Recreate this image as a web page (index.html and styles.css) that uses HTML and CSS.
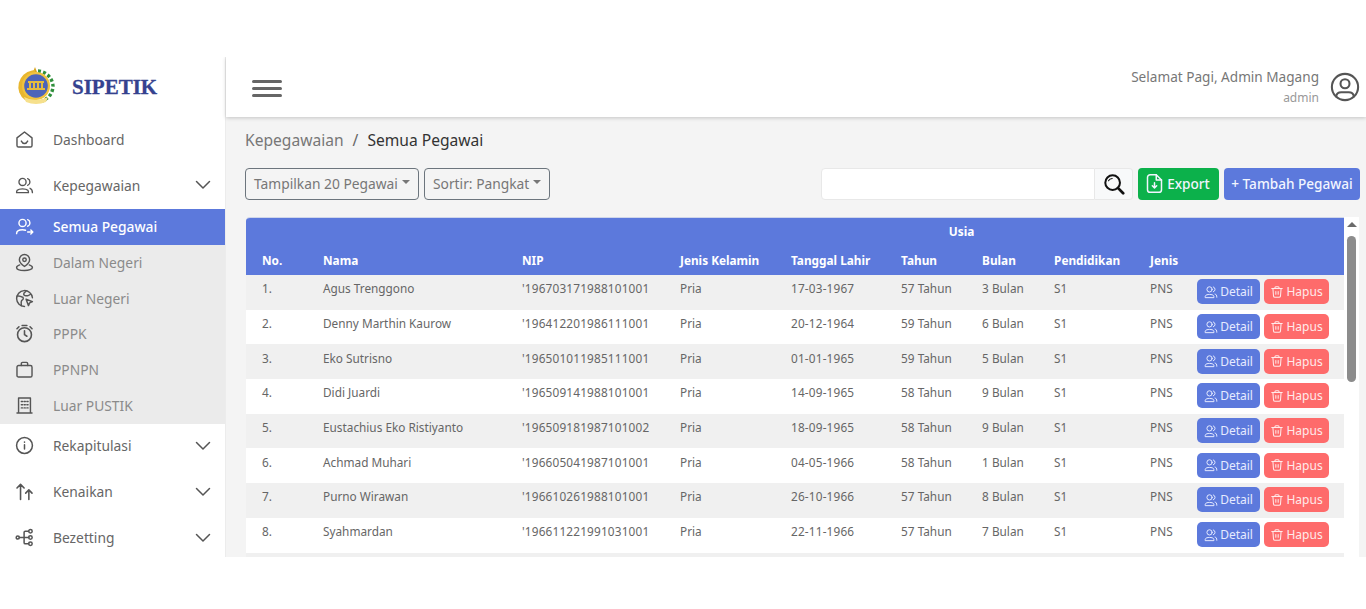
FILE: index.html
```html
<!DOCTYPE html>
<html lang="id">
<head>
<meta charset="utf-8">
<title>SIPETIK</title>
<link rel="stylesheet" href="styles.css">
</head>
<body>
<svg class="defs" width="0" height="0">
  <symbol id="i-users" viewBox="0 0 24 24"><g fill="none" stroke="currentColor" stroke-width="1.700" stroke-linecap="round" stroke-linejoin="round"><circle cx="9.500" cy="7.500" r="4.500"/><path d="M2 21c0-1.200 0-2.200.8-3 1-1 3-1.800 6.700-1.800s5.700.8 6.700 1.800c.8.800.8 1.800.8 3z"/><path d="M16 3.300a4.500 4.500 0 0 1 0 8.400M19 15.500c2 .6 3 1.800 3 5.500"/></g></symbol>
  <symbol id="i-chev" viewBox="0 0 16 10"><path d="M1.500 1.500 8 8l6.500-6.500" fill="none" stroke="currentColor" stroke-width="1.500" stroke-linecap="round" stroke-linejoin="round"/></symbol>
  <symbol id="i-trash" viewBox="0 0 24 24"><g fill="none" stroke="currentColor" stroke-width="1.800" stroke-linecap="round" stroke-linejoin="round"><path d="M3 6h18M8.500 6V4.500A1.500 1.500 0 0 1 10 3h4a1.500 1.500 0 0 1 1.500 1.500V6M5 6l1 13a2.500 2.500 0 0 0 2.500 2h7A2.500 2.500 0 0 0 18 19l1-13M10 11v5M14 11v5"/></g></symbol>
</svg>
<div class="app">
  <aside class="sidebar">
    <div class="brand">
      <svg class="emblem" viewBox="0 0 40 40">
        <path d="M19 1l-2 5h4z" fill="#d9a520"/>
        <path d="M16 4.500A16.500 16.500 0 0 0 9 34l6 3 4-1V4z" fill="#e8b62e"/>
        <path d="M22 5a16 16 0 0 1 15 15 16 16 0 0 1-11 15" fill="none" stroke="#2f8f3c" stroke-width="3.400" stroke-dasharray="3 2.200"/>
        <circle cx="20" cy="20" r="14" fill="#f0c23e"/>
        <circle cx="20" cy="20" r="11.800" fill="#4c64b9"/>
        <path d="M12 15h16v2H12zM13 17h2v5h-2zM17 17h2v5h-2zM21 17h2v5h-2zM25 17h2v5h-2zM11 22h18v2H11z" fill="#e5bb3e"/>
        <path d="M8 31q12 6 24 0l-2 5q-10 4-20 0z" fill="#f6e08c"/>
      </svg>
      <span class="brand-name">SIPETIK</span>
    </div>
    <nav class="menu">
      <a class="item">
        <svg class="ico" viewBox="0 0 24 24"><g fill="none" stroke="currentColor" stroke-width="1.800" stroke-linecap="round" stroke-linejoin="round"><path d="M4.500 21.500h15a2 2 0 0 0 2-2V10L12 2.500 2.500 10v9.500a2 2 0 0 0 2 2z"/><path d="M8 14c1 2 2.500 3 4 3s3-1 4-3"/></g></svg>
        <span>Dashboard</span>
      </a>
      <a class="item">
        <svg class="ico"><use href="#i-users"/></svg>
        <span>Kepegawaian</span>
        <svg class="chev"><use href="#i-chev"/></svg>
      </a>
      <div class="submenu">
        <a class="sub active">
          <svg class="ico" viewBox="0 0 24 24"><g fill="none" stroke="currentColor" stroke-width="1.800" stroke-linecap="round" stroke-linejoin="round"><circle cx="9.500" cy="7.500" r="4.500"/><path d="M2 21c0-3 2.500-4.800 7.500-4.800 1.500 0 2.800.2 3.800.5M16 3.300a4.500 4.500 0 0 1 0 8.400M16 19h6M20 16.500l2.500 2.500-2.500 2.500"/></g></svg>
          <span>Semua Pegawai</span>
        </a>
        <a class="sub">
          <svg class="ico" viewBox="0 0 24 24"><g fill="none" stroke="currentColor" stroke-width="1.800" stroke-linecap="round" stroke-linejoin="round"><path d="M12 2a6.500 6.500 0 0 0-6.500 6.500c0 3.500 3 6 6.500 8.500 3.500-2.500 6.500-5 6.500-8.500A6.500 6.500 0 0 0 12 2z"/><circle cx="12" cy="8.500" r="2.200"/><path d="M6 15c-2.500.8-4 1.800-4 3.200C2 20.500 6.500 22 12 22s10-1.500 10-3.800c0-1.400-1.500-2.400-4-3.200"/></g></svg>
          <span>Dalam Negeri</span>
        </a>
        <a class="sub">
          <svg class="ico" viewBox="0 0 24 24"><g fill="none" stroke="currentColor" stroke-width="1.800" stroke-linecap="round" stroke-linejoin="round"><path d="M12 22A10 10 0 1 1 22 11"/><path d="M3 9c3-1 4 1 6 1s2 3 0 4-1 4-1 7M14 2.500c-1 2-3 2-3 4s3 2 5 2 3-2 4-2"/><path d="M14 13l8 3-3.500 1.500L17 21z"/></g></svg>
          <span>Luar Negeri</span>
        </a>
        <a class="sub">
          <svg class="ico" viewBox="0 0 24 24"><g fill="none" stroke="currentColor" stroke-width="2" stroke-linecap="round" stroke-linejoin="round"><circle cx="12" cy="13.500" r="8.800"/><path d="M12 8.500v5l3 2M9 1.800h6M2.500 6 5 3.500M21.500 6 19 3.500"/></g></svg>
          <span>PPPK</span>
        </a>
        <a class="sub">
          <svg class="ico" viewBox="0 0 24 24"><g fill="none" stroke="currentColor" stroke-width="1.800" stroke-linecap="round" stroke-linejoin="round"><rect x="2.500" y="7" width="19" height="14.500" rx="2"/><path d="M8 7V4.500A1.500 1.500 0 0 1 9.500 3h5A1.500 1.500 0 0 1 16 4.500V7"/></g></svg>
          <span>PPNPN</span>
        </a>
        <a class="sub">
          <svg class="ico" viewBox="0 0 24 24"><g fill="none" stroke="currentColor" stroke-width="1.800" stroke-linecap="round" stroke-linejoin="round"><path d="M4.500 21.500V2.500h15v19M2.500 21.500h19"/><path d="M8 7h1.500M11.500 7H13M15 7h1.500M8 11h1.500M11.500 11H13M15 11h1.500M8 15h1.500M11.500 15H13M15 15h1.500"/></g></svg>
          <span>Luar PUSTIK</span>
        </a>
      </div>
      <a class="item">
        <svg class="ico" viewBox="0 0 24 24"><g fill="none" stroke="currentColor" stroke-width="1.900" stroke-linecap="round"><circle cx="12" cy="12" r="10"/><path d="M12 11v5.500M12 7.500v.3"/></g></svg>
        <span>Rekapitulasi</span>
        <svg class="chev"><use href="#i-chev"/></svg>
      </a>
      <a class="item">
        <svg class="ico" viewBox="0 0 24 24"><g fill="none" stroke="currentColor" stroke-width="2" stroke-linecap="round" stroke-linejoin="round"><path d="M7 22V3M2.500 7.500 7 3l4.500 4.500M17.500 22V10M13.500 14l4-4 4 4"/></g></svg>
        <span>Kenaikan</span>
        <svg class="chev"><use href="#i-chev"/></svg>
      </a>
      <a class="item">
        <svg class="ico" viewBox="0 0 24 24"><g fill="none" stroke="currentColor" stroke-width="1.900" stroke-linecap="round" stroke-linejoin="round"><circle cx="3.500" cy="12" r="2"/><circle cx="19.500" cy="4" r="2.200"/><circle cx="19.500" cy="12" r="2.200"/><circle cx="19.500" cy="20" r="2.200"/><path d="M5.500 12h12M17.300 4H13a1.500 1.500 0 0 0-1.500 1.500v13A1.500 1.500 0 0 0 13 20h4.300"/></g></svg>
        <span>Bezetting</span>
        <svg class="chev"><use href="#i-chev"/></svg>
      </a>
    </nav>
  </aside>
  <div class="main">
    <header class="topbar">
      <div class="burger"><i></i><i></i><i></i></div>
      <div class="user">
        <div class="user-text">
          <div class="user-name">Selamat Pagi, Admin Magang</div>
          <div class="user-role">admin</div>
        </div>
        <svg class="avatar" viewBox="0 0 32 32"><g fill="none" stroke="currentColor" stroke-width="2.200" stroke-linecap="round"><circle cx="16" cy="16" r="14"/><circle cx="16" cy="12.500" r="4.800"/><path d="M6.500 26c.5-3 2.500-4.500 5.500-4.500h8c3 0 5 1.500 5.500 4.500"/></g></svg>
      </div>
    </header>
    <div class="content">
      <div class="crumbs"><span class="crumb-muted">Kepegawaian</span><span class="crumb-sep">/</span><span class="crumb-cur">Semua Pegawai</span></div>
      <div class="toolbar">
        <button class="select sel-a">Tampilkan 20 Pegawai<i class="caret"></i></button>
        <button class="select sel-b">Sortir: Pangkat<i class="caret"></i></button>
        <div class="search">
          <div class="search-input"></div>
          <div class="search-btn"><svg viewBox="0 0 24 24" width="22" height="22"><g fill="none" stroke="#111" stroke-linecap="round"><circle cx="10.500" cy="10.500" r="8" stroke-width="2.200"/><path d="M16.500 16.500 22 22" stroke-width="3"/><path d="M6 8.500a5 5 0 0 1 4-2.500" stroke-width="1.200"/></g></svg></div>
        </div>
        <button class="btn btn-export"><svg viewBox="0 0 24 24" width="21" height="21"><g fill="none" stroke="currentColor" stroke-width="1.700" stroke-linecap="round" stroke-linejoin="round"><path d="M14 2H7a3 3 0 0 0-3 3v14a3 3 0 0 0 3 3h10a3 3 0 0 0 3-3V8z"/><path d="M14 2v6h6M12 11v6M9.500 14.500 12 17l2.500-2.500"/></g></svg>Export</button>
        <button class="btn btn-add">+ Tambah Pegawai</button>
      </div>
      <div class="table-row">
        <div class="table-box">
          <table class="grid">
            <colgroup><col class="c1"><col class="c2"><col class="c3"><col class="c4"><col class="c5"><col class="c6"><col class="c7"><col class="c8"><col class="c9"><col class="c10"></colgroup>
            <thead>
              <tr class="h1"><th colspan="5"></th><th colspan="2" class="center">Usia</th><th colspan="3"></th></tr>
              <tr class="h2"><th>No.</th><th>Nama</th><th>NIP</th><th>Jenis Kelamin</th><th>Tanggal Lahir</th><th>Tahun</th><th>Bulan</th><th>Pendidikan</th><th>Jenis</th><th></th></tr>
            </thead>
            <tbody>
              <tr><td>1.</td><td>Agus Trenggono</td><td>'196703171988101001</td><td>Pria</td><td>17-03-1967</td><td>57 Tahun</td><td>3 Bulan</td><td>S1</td><td>PNS</td><td class="acts"><button class="mini mini-d"><svg><use href="#i-users"/></svg>Detail</button><button class="mini mini-h"><svg><use href="#i-trash"/></svg>Hapus</button></td></tr>
              <tr><td>2.</td><td>Denny Marthin Kaurow</td><td>'196412201986111001</td><td>Pria</td><td>20-12-1964</td><td>59 Tahun</td><td>6 Bulan</td><td>S1</td><td>PNS</td><td class="acts"><button class="mini mini-d"><svg><use href="#i-users"/></svg>Detail</button><button class="mini mini-h"><svg><use href="#i-trash"/></svg>Hapus</button></td></tr>
              <tr><td>3.</td><td>Eko Sutrisno</td><td>'196501011985111001</td><td>Pria</td><td>01-01-1965</td><td>59 Tahun</td><td>5 Bulan</td><td>S1</td><td>PNS</td><td class="acts"><button class="mini mini-d"><svg><use href="#i-users"/></svg>Detail</button><button class="mini mini-h"><svg><use href="#i-trash"/></svg>Hapus</button></td></tr>
              <tr><td>4.</td><td>Didi Juardi</td><td>'196509141988101001</td><td>Pria</td><td>14-09-1965</td><td>58 Tahun</td><td>9 Bulan</td><td>S1</td><td>PNS</td><td class="acts"><button class="mini mini-d"><svg><use href="#i-users"/></svg>Detail</button><button class="mini mini-h"><svg><use href="#i-trash"/></svg>Hapus</button></td></tr>
              <tr><td>5.</td><td>Eustachius Eko Ristiyanto</td><td>'196509181987101002</td><td>Pria</td><td>18-09-1965</td><td>58 Tahun</td><td>9 Bulan</td><td>S1</td><td>PNS</td><td class="acts"><button class="mini mini-d"><svg><use href="#i-users"/></svg>Detail</button><button class="mini mini-h"><svg><use href="#i-trash"/></svg>Hapus</button></td></tr>
              <tr><td>6.</td><td>Achmad Muhari</td><td>'196605041987101001</td><td>Pria</td><td>04-05-1966</td><td>58 Tahun</td><td>1 Bulan</td><td>S1</td><td>PNS</td><td class="acts"><button class="mini mini-d"><svg><use href="#i-users"/></svg>Detail</button><button class="mini mini-h"><svg><use href="#i-trash"/></svg>Hapus</button></td></tr>
              <tr><td>7.</td><td>Purno Wirawan</td><td>'196610261988101001</td><td>Pria</td><td>26-10-1966</td><td>57 Tahun</td><td>8 Bulan</td><td>S1</td><td>PNS</td><td class="acts"><button class="mini mini-d"><svg><use href="#i-users"/></svg>Detail</button><button class="mini mini-h"><svg><use href="#i-trash"/></svg>Hapus</button></td></tr>
              <tr><td>8.</td><td>Syahmardan</td><td>'196611221991031001</td><td>Pria</td><td>22-11-1966</td><td>57 Tahun</td><td>7 Bulan</td><td>S1</td><td>PNS</td><td class="acts"><button class="mini mini-d"><svg><use href="#i-users"/></svg>Detail</button><button class="mini mini-h"><svg><use href="#i-trash"/></svg>Hapus</button></td></tr>
              <tr class="blank"><td colspan="10"></td></tr>
            </tbody>
          </table>
        </div>
        <div class="scrollbar"><i class="sb-up"></i><i class="sb-thumb"></i></div>
      </div>
    </div>
  </div>
</div>
</body>
</html>
```
FILE: styles.css
```css
* { box-sizing: border-box; }
html, body { margin: 0; padding: 0; background: #fff; }
body { font-family: "Noto Sans", "Open Sans", sans-serif; color: #666; height: 609px; overflow: hidden; padding-top: 57px; }
.defs { display: block; height: 0; }
.app { display: flex; height: 500px; overflow: hidden; background: #f4f4f4; }

.sidebar { width: 226px; flex: none; background: #fff; border-right: 1px solid #ececec; }
.brand { height: 58px; display: flex; align-items: center; padding-left: 16px; gap: 16px; margin-bottom: 2px; }
.emblem { width: 40px; height: 40px; flex: none; }
.brand-name { font-family: "Liberation Serif", serif; font-weight: 700; font-size: 21px; padding-top: 2px; color: #35428f; -webkit-text-stroke: .3px #35428f; }
.menu { display: flex; flex-direction: column; }
.item { height: 46px; display: flex; align-items: center; padding-left: 15px; padding-bottom: 2px; color: #666; font-size: 13.800px; flex: none; }
.submenu ~ .item { padding-bottom: 3px; }
.ico { width: 19px; height: 19px; margin-right: 19px; flex: none; color: #555; }
.chev { width: 16px; height: 10px; margin-left: auto; margin-right: 14px; color: #555; }
.submenu { background: #ebebeb; height: 215px; display: flex; flex-direction: column; }
.sub { flex: 0 0 35.830px; display: flex; align-items: center; padding-left: 15px; padding-bottom: 1px; color: #8a8a8a; font-size: 13.800px; }
.sub.active { background: #5c79dc; color: #fff; font-weight: 500; }
.sub.active .ico { color: #fff; }

.main { flex: 1; min-width: 0; display: flex; flex-direction: column; }
.topbar { height: 60px; flex: none; background: #fff; box-shadow: 0 1px 4px rgba(0,0,0,.2); display: flex; align-items: center; justify-content: space-between; padding: 0 6px 0 26px; position: relative; }
.burger { display: flex; flex-direction: column; gap: 4px; width: 30px; padding-top: 2px; }
.burger i { display: block; height: 3px; border-radius: 2px; background: #666; }
.user { display: flex; align-items: center; gap: 11px; }
.user-text { text-align: right; padding-top: 4px; }
.user-name { font-size: 13.600px; color: #777; line-height: 20px; margin-top: -4px; }
.user-role { font-size: 12px; color: #999; line-height: 18px; margin-top: 2px; }
.avatar { width: 30px; height: 30px; color: #555; }

.content { flex: 1; min-height: 0; padding: 0 6px 0 19px; }
.crumbs { height: 45px; margin-bottom: 6px; display: flex; align-items: center; font-size: 15.600px; }
.crumb-muted { color: #777; }
.crumb-sep { margin: 0 9px; color: #666; }
.crumb-cur { color: #333; }

.toolbar { display: flex; align-items: stretch; height: 32px; gap: 5px; }
.select { font: inherit; font-size: 13.800px; color: #777; background: transparent; border: 1px solid #6c757d; border-radius: 4px; display: flex; align-items: center; justify-content: space-between; padding: 0 8px 2px; white-space: nowrap; }
.sel-a { width: 174px; }
.sel-b { width: 126px; }
.caret { display: block; border-top: 4.500px solid #777; border-left: 4.500px solid transparent; border-right: 4.500px solid transparent; margin-left: 3px; margin-bottom: 2px; }
.search { margin-left: auto; display: flex; width: 312px; }
.search-input { flex: 1; background: #fff; border: 1px solid #e8e8e8; border-radius: 4px 0 0 4px; }
.search-btn { width: 38px; background: #f8f9fa; border: 1px solid #e8e8e8; border-left: 0; border-radius: 0 4px 4px 0; display: flex; align-items: center; justify-content: center; }
.btn { font: inherit; font-weight: 500; font-size: 13.600px; color: #f2f5ff; border: 0; border-radius: 4px; display: flex; align-items: center; justify-content: center; gap: 2px; padding: 0 0 2px; white-space: nowrap; }
.btn-export { width: 81px; background: #0cb14b; padding-right: 3px; }
.btn-add { width: 136px; background: #5c79dc; }

.table-row { display: flex; margin-top: 17px; margin-left: 1px; align-items: flex-start; }
.table-box { width: 1098px; flex: none; border-radius: 4px 0 0 0; overflow: hidden; border-top: 1px solid #cfd6ea; }
.grid { width: 100%; border-collapse: collapse; table-layout: fixed; font-size: 11.800px; }
.c1 { width: 61px; } .c2 { width: 199px; } .c3 { width: 158px; } .c4 { width: 111px; } .c5 { width: 110px; }
.c6 { width: 81px; } .c7 { width: 72px; } .c8 { width: 96px; } .c9 { width: 47px; } .c10 { width: 163px; }
thead { background: #5c79dc; color: #fff; }
th { font-weight: 700; text-align: left; padding: 0 0 0 16px; white-space: nowrap; }
th.center { text-align: center; padding: 0 0 2px; }
.h1 { height: 28px; }
.h2 { height: 29px; }
.h2 th { padding-bottom: 1px; }
tbody tr { height: 34.700px; background: #fff; }
tbody tr:nth-child(odd) { background: #f0f0f0; }
td { padding: 0 0 8px 16px; white-space: nowrap; color: #666; }
td:nth-child(3), td:nth-child(5) { letter-spacing: .17px; }
td.acts { padding: 0 0 0 16px; letter-spacing: 0; }
.blank td { padding: 0; }
.acts { font-size: 0; }
.mini { font: inherit; font-size: 12px; height: 25px; border: 0; border-radius: 5px; color: #fff; display: inline-flex; align-items: center; justify-content: center; gap: 2px; padding: 0; vertical-align: middle; margin-bottom: 1px; }
.mini svg { width: 14px; height: 14px; }
.mini-d { width: 63px; background: #5c79dc; margin-right: 4px; color: #e6ebff; }
.mini-h { width: 65px; background: #fe6b6b; color: #ffeaea; }

.scrollbar { width: 15px; flex: none; height: 340px; background: #fff; display: flex; flex-direction: column; align-items: center; padding-top: 5px; }
.sb-up { display: block; border-bottom: 5px solid #6b6b6b; border-left: 5px solid transparent; border-right: 5px solid transparent; }
.sb-thumb { display: block; width: 9px; height: 146px; margin-top: 9px; border-radius: 5px; background: #8c8c8c; }
```
